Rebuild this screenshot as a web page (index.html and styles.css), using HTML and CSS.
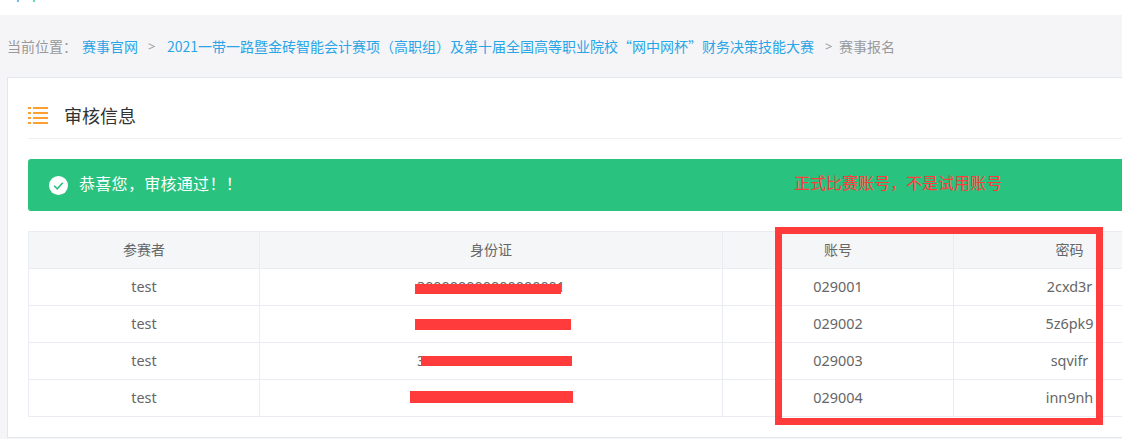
FILE: index.html
```html
<!DOCTYPE html>
<html lang="zh-CN">
<head>
<meta charset="utf-8">
<title>审核信息</title>
<link rel="stylesheet" href="styles.css">
</head>
<body>
<div class="page">
  <header class="topbar">
    <svg class="logo-cut" width="40" height="2" viewBox="0 0 40 2"><rect x="17" width="2" height="2" fill="#6cbcf0"/><rect x="33" width="2" height="2" fill="#5fd6b4"/></svg>
  </header>
  <nav class="crumbs">
    <span class="crumb-label">当前位置：</span>
    <a class="crumb-link crumb-first">赛事官网</a>
    <span class="sep sep-a">&gt;</span>
    <a class="crumb-link crumb-long">2021一带一路暨金砖智能会计赛项（高职组）及第十届全国高等职业院校“网中网杯”财务决策技能大赛</a>
    <span class="sep sep-b">&gt;</span>
    <span class="crumb-current">赛事报名</span>
  </nav>
  <main class="card">
    <div class="card-title">
      <span class="list-icon"><i></i><b></b><i></i><b></b><i></i><b></b><i></i><b></b></span>
      <h2>审核信息</h2>
    </div>
    <div class="alert">
      <svg class="check" width="19" height="19" viewBox="0 0 19 19"><circle cx="9.5" cy="9.5" r="9.5" fill="#fff"/><path d="M5.2 9.8l3 3 5.6-6" fill="none" stroke="#29c37f" stroke-width="1.6"/></svg>
      <span class="alert-text">恭喜您，审核通过！！</span>
    </div>
    <table class="grid">
      <colgroup><col class="c1"><col class="c2"><col class="c3"><col class="c4"></colgroup>
      <thead><tr><th>参赛者</th><th>身份证</th><th>账号</th><th>密码</th></tr></thead>
      <tbody>
        <tr><td>test</td><td>300000000000000001</td><td>029001</td><td>2cxd3r</td></tr>
        <tr><td>test</td><td>300000000000000000</td><td>029002</td><td>5z6pk9</td></tr>
        <tr><td>test</td><td>300000000000000000</td><td>029003</td><td>sqvifr</td></tr>
        <tr><td>test</td><td>300000000000000000</td><td>029004</td><td>inn9nh</td></tr>
      </tbody>
    </table>
  </main>
  <div class="note">正式比赛账号，不是试用账号</div>
  <div class="frame"></div>
  <div class="bar bar1"></div>
  <div class="bar bar2"></div>
  <div class="bar bar3"></div>
  <div class="bar bar4"></div>
</div>
</body>
</html>
```
FILE: styles.css
```css
* { box-sizing: border-box; }
html, body { margin: 0; padding: 0; }
body { width: 1122px; height: 439px; overflow: hidden; background: #f5f5f8; font-family: "Noto Sans", "Noto Sans CJK SC", sans-serif; color: #666; }
.page { position: relative; width: 1122px; height: 439px; overflow: hidden; }
.topbar { height: 15px; background: #fff; }
.logo-cut { display: block; }
.crumbs { height: 62px; padding: 0 0 0 7px; display: flex; align-items: center; font-size: 14px; color: #999; white-space: nowrap; }
.crumb-link { color: #2aa5e6; }
.crumb-first { margin-left: 5px; }
.crumb-long { font-family: "Noto Sans CJK SC", sans-serif; width: 648px; }
.sep { font-size: 13px; }
.sep-a { margin: 0 3px 0 10px; width: 16px; }
.sep-b { margin-left: 10px; width: 14px; }
.crumb-current { color: #999; }
.card { width: 1200px; height: 361px; margin-left: 7px; padding: 0 20px; background: #fff; border: 1px solid #e1e7ee; }
.card-title { height: 61px; padding-top: 15px; display: flex; align-items: center; border-bottom: 1px solid #eef0f3; }
.card-title h2 { margin: 0 0 0 16px; font-size: 18px; line-height: 24px; font-weight: 400; color: #333; }
.list-icon { display: grid; grid-template-columns: 3px 15px; column-gap: 2px; row-gap: 3px; grid-auto-rows: 2px; }
.list-icon i, .list-icon b { display: block; background: #ff9f2e; }
.alert { height: 52px; margin-top: 20px; padding-left: 21px; display: flex; align-items: center; gap: 11px; border-radius: 3px; background: #29c37f; color: #fff; font-size: 16px; }
.alert-text { margin-top: -5px; letter-spacing: .3px; }
.check { display: block; flex: none; }
.grid { width: 1157px; margin-top: 20px; border-collapse: collapse; table-layout: fixed; font-size: 14.4px; }
.c1 { width: 231px; }
.c2 { width: 463px; }
.c3 { width: 231px; }
.c4 { width: 232px; }
.grid th, .grid td { height: 37px; padding: 0 0 2px; text-align: center; font-weight: 400; color: #666; border: 1px solid #e9edf1; }
.grid th { background: #f5f6f8; font-size: 14px; padding-bottom: 2px; }
.note { position: absolute; left: 794px; top: 171px; font-size: 16px; line-height: 24px; color: #ff3b3b; white-space: nowrap; }
.frame { position: absolute; left: 775px; top: 227px; width: 328px; height: 198px; border: 7px solid #ff3b3b; }
.bar { position: absolute; background: #ff3b3b; }
.bar1 { left: 415px; top: 284px; width: 146px; height: 10px; }
.bar2 { left: 415px; top: 319px; width: 156px; height: 11px; }
.bar3 { left: 421px; top: 356px; width: 151px; height: 10px; }
.bar4 { left: 410px; top: 391px; width: 163px; height: 12px; }
```
